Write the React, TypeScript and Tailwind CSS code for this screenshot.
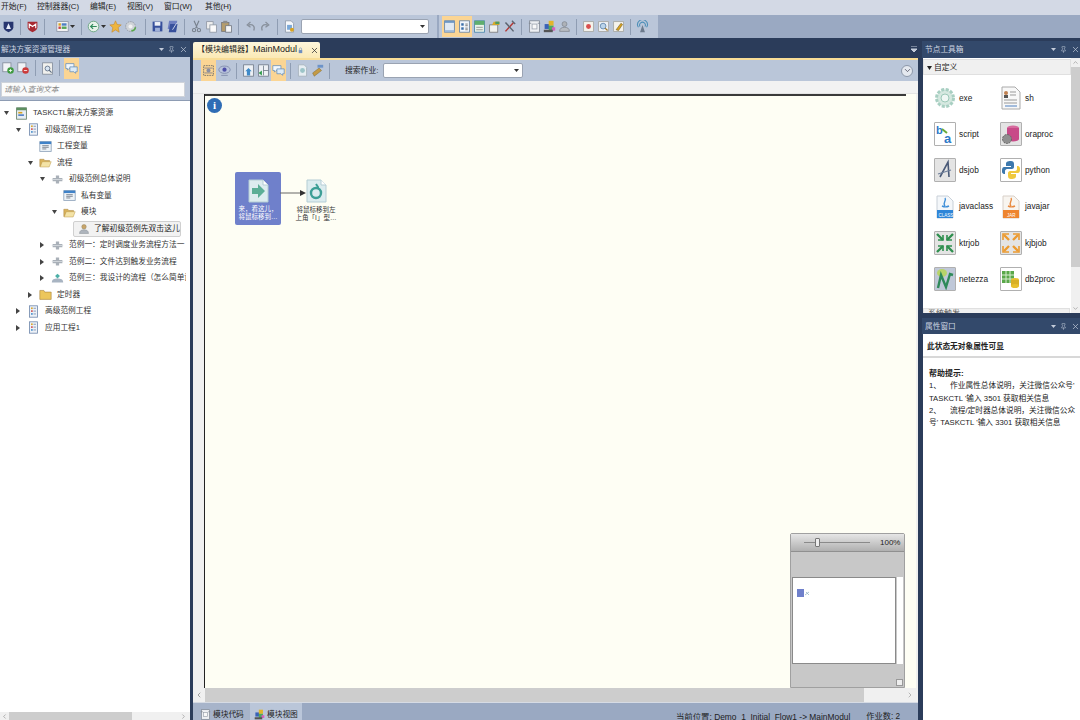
import React from 'react';
import { X, Pin, ChevronLeft, ChevronRight, ChevronUp, ChevronDown } from 'lucide-react';

const cjk = { fontFamily: '"Liberation Sans", "Noto Sans CJK SC", sans-serif' };

type IconProps = { name: string; size?: number };

// small toolbar and tree drawings
const Icon = ({ name, size = 14 }: IconProps) => {
  const body: Record<string, React.ReactNode> = {
    shieldBlue: <><path d="M2 2h12v7c0 3-3 5-6 6-3-1-6-3-6-6z" fill="#27356f" /><path d="M8 4l3 7H5z" fill="#e8ecf8" /></>,
    shieldRed: <><path d="M2 2h12v7c0 3-3 5-6 6-3-1-6-3-6-6z" fill="#a82a33" /><path d="M4 10V5l4 3 4-3v5" stroke="#fff" fill="none" strokeWidth="1.4" /></>,
    grid: <><rect x="1" y="2" width="14" height="12" fill="#f4f4f4" stroke="#8a93a5" /><rect x="3" y="4" width="3" height="3" fill="#d9a321" /><rect x="7" y="4" width="6" height="3" fill="#4f7fc4" /><rect x="3" y="8" width="3" height="3" fill="#c8474a" /><rect x="7" y="8" width="6" height="3" fill="#5aa55a" /></>,
    back: <><circle cx="8" cy="8" r="6.5" fill="#e8f3ea" stroke="#5f9f78" /><path d="M12 8H5M7.5 5L4.5 8l3 3" stroke="#2f8b5a" strokeWidth="1.5" fill="none" /></>,
    star: <><path d="M8 1l2 4.5 5 .5-3.7 3.3L12.5 15 8 12.3 3.5 15l1.2-5.7L1 6l5-.5z" fill="#eeb53f" stroke="#c4862a" strokeWidth=".7" /></>,
    gearGreen: <><circle cx="8" cy="8" r="6" fill="#cfd3d8" stroke="#8c939c" strokeDasharray="2 1" /><circle cx="8" cy="8" r="2.5" fill="#f2f2f2" /><path d="M9 13a4 4 0 0 0 5-4" stroke="#58a84a" strokeWidth="2" fill="none" /></>,
    save: <><rect x="2" y="2" width="12" height="12" fill="#37509c" /><rect x="4.5" y="2.5" width="7" height="4.5" fill="#eef1f8" /><rect x="5" y="9.5" width="6" height="4.5" fill="#9fb0d8" /></>,
    saveAll: <><rect x="4" y="1" width="10" height="10" fill="#6e7fc0" transform="skewX(-10)" /><rect x="3" y="5" width="9" height="10" fill="#37509c" transform="skewX(-10) translate(3 0)" /><path d="M8 12l5-8" stroke="#e8ecf8" /></>,
    cut: <><path d="M5 1l4 9M11 1L7 10" stroke="#77808c" strokeWidth="1.4" /><circle cx="5" cy="12.5" r="2" fill="none" stroke="#77808c" strokeWidth="1.3" /><circle cx="11" cy="12.5" r="2" fill="none" stroke="#77808c" strokeWidth="1.3" /></>,
    copy: <><rect x="2" y="2" width="8" height="9" fill="#eee" stroke="#8e96a2" /><rect x="6" y="6" width="8" height="9" fill="#fafafa" stroke="#8e96a2" /></>,
    paste: <><rect x="2" y="3" width="9" height="11" fill="#b59c6b" stroke="#777" /><rect x="4" y="1" width="5" height="3" fill="#8d8d8d" /><rect x="7" y="7" width="7" height="8" fill="#f6f6f6" stroke="#6f7680" /></>,
    undo: <path d="M12 13c2-5-1-8-6-7M8 2.5L4 6l4 3" stroke="#88909c" strokeWidth="1.6" fill="none" />,
    redo: <path d="M4 13C2 8 5 5 10 6M8 2.5L12 6 8 9" stroke="#88909c" strokeWidth="1.6" fill="none" />,
    doc: <><path d="M3 1h7l3 3v11H3z" fill="#f6f8fb" stroke="#8b97a8" /><rect x="5" y="6" width="6" height="6" fill="#7aa8d8" /><circle cx="11" cy="12" r="2.5" fill="#d9a321" /></>,
    paneA: <><rect x="2" y="1" width="12" height="14" fill="#dfe8f3" stroke="#5f7fa5" /><rect x="2" y="1" width="12" height="2.5" fill="#6d96c4" /><rect x="2" y="12.5" width="12" height="2.5" fill="#9db8d6" /></>,
    paneB: <><rect x="2" y="1" width="12" height="14" fill="#f2f6fa" stroke="#5f7fa5" /><rect x="4" y="4" width="3" height="3" fill="#3b6ea8" /><rect x="4" y="9" width="3" height="3" fill="#3b6ea8" /><path d="M9 5h3M9 7h3M9 10h3M9 12h3" stroke="#666" /></>,
    paneC: <><rect x="2" y="1" width="12" height="14" fill="#eaf4ea" stroke="#3f7fa8" /><rect x="2" y="1" width="12" height="5" fill="#5fae6f" /><path d="M4 9h8M4 12h8" stroke="#888" /></>,
    box: <><rect x="2" y="6" width="10" height="9" fill="#f1f1ee" stroke="#777" /><path d="M5 6l2-4h7v4z" fill="#d7a928" /><rect x="9" y="2" width="5" height="3" fill="#4f9a5f" /></>,
    tools: <><path d="M3 14L13 3" stroke="#b43a36" strokeWidth="1.8" /><path d="M3 3l10 11" stroke="#5b6470" strokeWidth="1.8" /><path d="M11 1l4 4" stroke="#5b6470" strokeWidth="1.6" /></>,
    frame: <><rect x="2" y="1" width="12" height="14" fill="#eef0f3" stroke="#7d8590" /><rect x="5" y="5" width="6" height="6" fill="#f8f8f8" stroke="#9aa2ad" /><path d="M1 4h3M12 4h3" stroke="#7d8590" /></>,
    blocks: <><rect x="2" y="5" width="6" height="6" fill="#3a62b8" /><rect x="7" y="1" width="6" height="6" fill="#e2b52a" /><rect x="7" y="7" width="6" height="6" fill="#4ea860" /><rect x="11" y="9" width="4" height="4" fill="#d85fc0" /><rect x="1" y="12" width="11" height="3" fill="#555" /></>,
    person: <><circle cx="8" cy="5" r="3" fill="#aeb2b8" stroke="#848a92" /><path d="M2 14c0-4 3-5 6-5s6 1 6 5z" fill="#b8bcc2" stroke="#848a92" /></>,
    noteRed: <><rect x="2" y="2" width="12" height="12" fill="#f5f3ec" stroke="#a5a5a0" /><circle cx="8" cy="8" r="3" fill="#d9504f" /></>,
    noteSearch: <><rect x="2" y="2" width="12" height="12" fill="#eef1f5" stroke="#a5a5a0" /><circle cx="7.5" cy="7.5" r="3.5" fill="#bcd4ea" stroke="#5d83aa" /><path d="M10 10l3 3" stroke="#a57b2a" strokeWidth="1.6" /></>,
    notePen: <><rect x="2" y="2" width="12" height="12" fill="#f5f3ec" stroke="#a5a5a0" /><path d="M5 12l6-8 2 1.5-5 7.5z" fill="#d9a321" stroke="#5a4a20" strokeWidth=".6" /></>,
    antenna: <><path d="M3 9a6 6 0 1 1 10 0M5 8a3.5 3.5 0 1 1 6 0" stroke="#4d8fb8" strokeWidth="1.3" fill="none" /><path d="M8 6l3 9H5z" fill="#6b7a8c" /></>,
    addGreen: <><rect x="1" y="1" width="10" height="11" fill="#f1f3f6" stroke="#808a98" /><circle cx="10.5" cy="10.5" r="4" fill="#3e9a3f" /><path d="M8.5 10.5h4M10.5 8.5v4" stroke="#fff" /></>,
    delRed: <><rect x="1" y="1" width="10" height="11" fill="#f1f3f6" stroke="#808a98" /><circle cx="10.5" cy="10.5" r="4" fill="#cc3b3b" /><path d="M8.5 10.5h4" stroke="#fff" /></>,
    find: <><rect x="2" y="1" width="12" height="14" fill="#f1f1ee" stroke="#808a98" /><circle cx="8" cy="8" r="3" fill="#d7e4f2" stroke="#5a6a80" /><path d="M10 10l3 3" stroke="#5a6a80" strokeWidth="1.4" /></>,
    chat: <><path d="M1 2h10v6H5l-2 2V8H1z" fill="#f2f7fc" stroke="#6d93bd" /><path d="M6 6h9v6h-2v2l-2-2H6z" fill="#dcebf8" stroke="#6d93bd" /></>,
    fit: <><rect x="2" y="2" width="12" height="12" fill="none" stroke="#666" strokeDasharray="2 1" /><path d="M3 5l10 0M3 11h10" stroke="#778" /><circle cx="8" cy="8" r="2.5" fill="#8b8fa0" /></>,
    eye: <><ellipse cx="8" cy="7" rx="7" ry="4.5" fill="#b9c4dc" stroke="#7a86a8" /><circle cx="8" cy="7" r="2.6" fill="#4d4fa8" /><path d="M4 14h8" stroke="#7a86a8" /></>,
    upTree: <><rect x="2" y="1" width="12" height="14" fill="#eef1f5" stroke="#6f7a88" /><path d="M8 5l4 4h-2v5H6V9H4z" fill="#3f8ac8" /></>,
    leftTree: <><rect x="2" y="1" width="12" height="14" fill="#eef1f5" stroke="#6f7a88" /><path d="M8 2v12M8 8h6" stroke="#6f7a88" /><path d="M2 11l4-3v6z" fill="#2f9a4a" /></>,
    runDoc: <><path d="M3 1h7l3 3v11H3z" fill="#e6edf2" stroke="#a4b0ba" /><circle cx="8" cy="8" r="3" fill="#9cc4c8" /></>,
    brush: <><path d="M4 15l-2-4 8-6 3 3z" fill="#c49a45" stroke="#806a30" strokeWidth=".6" /><rect x="8" y="1" width="7" height="3.5" fill="#6d93c8" /></>,
    root: <><rect x="2" y="1" width="12" height="14" fill="#e8eef4" stroke="#5d7a60" /><rect x="2" y="1" width="12" height="3" fill="#5d8f5f" /><rect x="4" y="6" width="5" height="2" fill="#d9a321" /><rect x="4" y="9" width="7" height="2" fill="#4f7fc4" /></>,
    project: <><rect x="3" y="1" width="10" height="14" fill="#eef2f8" stroke="#6f87ab" /><rect x="5" y="3" width="2" height="2" fill="#d9a321" /><rect x="5" y="6.5" width="2" height="2" fill="#cc4a4a" /><rect x="5" y="10" width="2" height="2" fill="#3f8ac8" /><path d="M8 4h3M8 7.5h3M8 11h3" stroke="#6f87ab" /></>,
    vars: <><rect x="1" y="2" width="14" height="12" fill="#eef3f8" stroke="#8aa0b8" /><rect x="1" y="2" width="14" height="3" fill="#3f82c8" /><path d="M4 7h8M4 9h8M4 11h5" stroke="#6a7480" /></>,
    folderOpen: <><path d="M1 4h5l1 1.5h6V8H4L2 13H1z" fill="#d9b25a" stroke="#a5803a" strokeWidth=".6" /><path d="M4 7h11l-2.5 6.5H1.5z" fill="#f4e3a6" stroke="#bd9a4c" strokeWidth=".6" /></>,
    folder: <><path d="M1 3h5l1 2h8v9H1z" fill="#ecc65c" stroke="#a5803a" strokeWidth=".7" /></>,
    flow: <><path d="M6 3h4v3h4v4h-4v3H6v-3H2V6h4z" fill="#a9b0b8" /><path d="M1 8h14" stroke="#d8dce0" /></>,
    flowTeal: <><path d="M1 13c0-4 3-5 7-5s7 1 7 5z" fill="#a8b4c2" /><path d="M8 2l3 3-3 3-3-3z" fill="#4db0a8" /></>,
    userJob: <><circle cx="8" cy="5" r="3" fill="#c9a66b" stroke="#8a7a55" strokeWidth=".6" /><path d="M2 14c0-4 3-5 6-5s6 1 6 5z" fill="#aeb4bc" stroke="#7f868e" strokeWidth=".6" /></>,
    lock: <><rect x="4" y="7" width="8" height="7" fill="#6f8fc0" /><path d="M5.5 7V4.5a2.5 2.5 0 0 1 5 0V7" stroke="#6f8fc0" strokeWidth="1.4" fill="none" /></>,
  };
  return (
    <svg width={size} height={size} viewBox="0 0 16 16" className="shrink-0">
      {body[name]}
    </svg>
  );
};

const Sep = () => <div className="w-px h-[16px] bg-[#8f9db3] mx-[4px] shrink-0" />;

const Tb = ({ name, on }: { name: string; on?: boolean }) => (
  <div className={`w-[15px] h-[21px] flex items-center justify-center shrink-0 ${on ? 'bg-[#fbd594]' : ''}`}>
    <Icon name={name} size={13} />
  </div>
);

const Caret = () => (
  <svg width="5" height="3" viewBox="0 0 5 3" className="shrink-0"><path d="M0 0h5L2.5 3z" fill="#333" /></svg>
);

const Combo = ({ w }: { w: string }) => (
  <div className={`${w} h-[15px] bg-white border border-[#9aa3b2] rounded-[2px] flex items-center justify-end pr-[3px] shrink-0`}>
    <Caret />
  </div>
);

const PaneTitle = ({ title, h = 'h-[16px]', inner = 'pl-[1px] pr-[2px]' }: { title: string; h?: string; inner?: string }) => (
  <div className={`${h} ${inner} flex items-center bg-[#33496b] text-[#cbd3e0] text-[7.7px] leading-none shrink-0`}>
    <span className="flex-1 whitespace-nowrap overflow-hidden pt-px">{title}</span>
    <svg width="5" height="3" viewBox="0 0 5 3" className="mr-[4px]"><path d="M0 0h5L2.5 3z" fill="#c4ccda" /></svg>
    <Pin size={7} className="text-[#b8c2d2] mr-[4px]" />
    <X size={9} className="text-[#b8c2d2]" />
  </div>
);

const menus = ['开始(F)', '控制器器(C)', '编辑(E)', '视图(V)', '窗口(W)', '其他(H)'];

type Row = { level: number; icon: string; label: string; arrow?: 'open' | 'closed'; selected?: boolean };

const rows: Row[] = [
  { level: 0, icon: 'root', label: 'TASKCTL解决方案资源', arrow: 'open' },
  { level: 1, icon: 'project', label: '初级范例工程', arrow: 'open' },
  { level: 2, icon: 'vars', label: '工程变量' },
  { level: 2, icon: 'folderOpen', label: '流程', arrow: 'open' },
  { level: 3, icon: 'flow', label: '初级范例总体说明', arrow: 'open' },
  { level: 4, icon: 'vars', label: '私有变量' },
  { level: 4, icon: 'folderOpen', label: '模块', arrow: 'open' },
  { level: 5, icon: 'userJob', label: '了解初级范例先双击这儿', selected: true },
  { level: 3, icon: 'flow', label: '范例一：定时调度业务流程方法一', arrow: 'closed' },
  { level: 3, icon: 'flow', label: '范例二：文件达到触发业务流程', arrow: 'closed' },
  { level: 3, icon: 'flowTeal', label: '范例三：我设计的流程（怎么简单设计', arrow: 'closed' },
  { level: 2, icon: 'folder', label: '定时器', arrow: 'closed' },
  { level: 1, icon: 'project', label: '高级范例工程', arrow: 'closed' },
  { level: 1, icon: 'project', label: '应用工程1', arrow: 'closed' },
];

const TreeRow = ({ row }: { row: Row }) => {
  const indent = [3, 15, 27, 39, 51, 73][row.level];
  return (
    <div className="h-[16.5px] flex items-center whitespace-nowrap text-[7.7px] text-[#333] relative" style={{ paddingLeft: indent }}>
      {row.selected ? (
        <div className="h-[16px] w-[108px] flex items-center bg-[#f2f2f2] border border-[#d0d0d0] rounded-[2px] pl-[4px] gap-[4px] text-[7.8px] text-[#222]">
          <Icon name={row.icon} size={12} />
          <span>{row.label}</span>
        </div>
      ) : (
        <>
          <div className="w-[6px] flex justify-center shrink-0">
            {row.arrow === 'open' && <svg width="5" height="4" viewBox="0 0 5 4"><path d="M0 0h5L2.5 4z" fill="#444" /></svg>}
            {row.arrow === 'closed' && <svg width="4" height="6" viewBox="0 0 4 6"><path d="M0 0l4 3-4 3z" fill="#444" /></svg>}
          </div>
          <div className="ml-[6px] mr-[5px] shrink-0"><Icon name={row.icon} size={13} /></div>
          <span>{row.label}</span>
        </>
      )}
    </div>
  );
};

const LeftPanel = () => (
  <div className="w-[190px] flex flex-col shrink-0 overflow-hidden">
    <PaneTitle title="解决方案资源管理器" />
    <div className="h-[22px] bg-[#bac6d9] flex items-center pl-[1px] shrink-0">
      <Tb name="addGreen" />
      <Tb name="delRed" />
      <Sep />
      <Tb name="find" />
      <Sep />
      <Tb name="chat" on />
    </div>
    <div className="h-[21px] bg-[#bac6d9] px-[1px] pb-[2px] pt-[3px] shrink-0">
      <div className="h-[15px] w-[184px] bg-[#fbfbfb] border border-[#cfd3da] flex items-center pl-[2px] text-[7.8px] italic text-[#888]">请输入查询文本</div>
    </div>
    <div className="flex-1 bg-white pt-[4px] overflow-hidden pr-[3px] border-t border-[#8e9cb3]">
      <div className="w-[186px] overflow-hidden">
        {rows.map((row) => <TreeRow key={row.label} row={row} />)}
      </div>
    </div>
    <div className="h-[8px] bg-[#f0f0f0] flex items-center shrink-0 overflow-hidden">
      <ChevronLeft size={7} className="text-[#888] mx-[1px]" />
      <div className="w-[123px] h-full bg-[#cdcdcd]" />
      <div className="flex-1" />
      <ChevronRight size={7} className="text-[#888] mr-[3px]" />
    </div>
  </div>
);

const DocIcon = ({ glyph }: { glyph: 'arrow' | 'drop' }) => (
  <svg width="21" height="24" viewBox="0 0 21 24" className="block">
    <path d="M1 1h14l5 5v17H1z" fill="#dcecef" stroke="#b4cdd4" />
    <path d="M15 1v5h5" fill="#fff" stroke="#b4cdd4" />
    {glyph === 'arrow' && <path d="M4 9h6V5l7 7-7 7v-4H4z" fill="#5bae96" />}
    {glyph === 'drop' && (
      <>
        <path d="M10 5l2 3v2" stroke="#3d9f96" strokeWidth="2" fill="none" />
        <circle cx="10" cy="14" r="5" fill="none" stroke="#3d9f96" strokeWidth="2.4" />
      </>
    )}
  </svg>
);

const Canvas = () => (
  <div className="flex-1 relative bg-[#fefef4] border-l border-[#222] overflow-hidden">
    <div className="h-[2px] w-[701px] bg-[#3a3a3a]" />
    <div className="absolute left-[2px] top-[4px] w-[15px] h-[15px] rounded-full bg-[#2f6db5] flex items-center justify-center text-white text-[11px] font-bold leading-none" style={{ fontFamily: '"Liberation Serif", serif' }}>i</div>

    <div className="absolute left-[30px] top-[78px] w-[46px] h-[53px] bg-[#6f80cb] rounded-[2px] flex flex-col items-center pt-[7px]">
      <DocIcon glyph="arrow" />
      <div className="text-[6.5px] leading-[8px] text-white text-center mt-[2px] whitespace-nowrap">
        来，看这儿，<br />将鼠标移到…
      </div>
    </div>

    <svg width="28" height="8" viewBox="0 0 28 8" className="absolute left-[75px] top-[95px]">
      <path d="M0 4h22" stroke="#666" />
      <path d="M20 1l6 3-6 3z" fill="#333" />
    </svg>

    <div className="absolute left-[89px] top-[85px] w-[44px] flex flex-col items-center">
      <DocIcon glyph="drop" />
      <div className="text-[6.5px] leading-[8px] text-[#333] text-center mt-[3px] whitespace-nowrap">
        将鼠标移到左<br />上角「I」型…
      </div>
    </div>

    {/* minimap */}
    <div className="absolute left-[585px] top-[439px] w-[115px] h-[155px] bg-[#c8c8c8] border border-[#a0a0a0] rounded-t-[2px] flex flex-col">
      <div className="h-[18px] bg-gradient-to-b from-[#e6e6e6] to-[#b0b0b0] border-b border-[#909090] flex items-center pl-[13px] shrink-0">
        <div className="w-[66px] h-px bg-[#8a8a8a] relative">
          <div className="absolute left-[11px] -top-[4px] w-[5px] h-[9px] bg-[#eee] border border-[#777] rounded-[1px]" />
        </div>
        <span className="ml-[10px] text-[8px] text-[#222]">100%</span>
      </div>
      <div className="h-[25px] shrink-0" />
      <div className="flex h-[87px] shrink-0 pl-[1px]">
        <div className="w-[104px] bg-white border border-[#8a8a8a] relative">
          <div className="absolute left-[4px] top-[11px] w-[7px] h-[8px] bg-[#6f80cb]" />
          <svg width="5" height="5" viewBox="0 0 5 5" className="absolute left-[12px] top-[13px]"><path d="M0 4l4-3M1 1l3 3" stroke="#8ab" strokeWidth=".7" /></svg>
        </div>
        <div className="w-[6px] bg-white ml-px" />
      </div>
      <div className="flex-1 flex items-end justify-end pr-[1px] pb-[1px]">
        <div className="w-[7px] h-[7px] bg-[#eee] border border-[#999]" />
      </div>
    </div>
  </div>
);

const CenterPanel = () => (
  <div className="flex-1 flex flex-col ml-[3px] mr-[4px] min-w-0">
    <div className="h-[17px] flex items-end shrink-0 pt-[3px]">
      <div className="w-[127px] h-[16px] bg-gradient-to-b from-[#fdf6dc] to-[#fbe9b5] rounded-t-[2px] flex items-center pl-[4px] text-[8px] text-[#222] whitespace-nowrap">
        <span>【模块编辑器】</span>
        <span className="text-[9px]">MainModul</span>
        <Icon name="lock" size={7} />
        <X size={9} className="ml-[6px] text-[#333]" />
      </div>
      <div className="flex-1" />
      <svg width="6" height="6" viewBox="0 0 6 6" className="mb-[6px] mr-[1px]"><path d="M0 0h6M0 3h6L3 6z" stroke="#c4ccda" fill="#c4ccda" /></svg>
    </div>
    <div className="h-[2px] bg-[#f8dd97] shrink-0" />
    <div className="h-[21px] bg-[#bac6d9] flex items-center pl-[8px] pr-[5px] shrink-0">
      <Tb name="fit" on />
      <div className="w-[1px]" />
      <Tb name="eye" />
      <Sep />
      <Tb name="upTree" />
      <Tb name="leftTree" />
      <Tb name="chat" on />
      <Sep />
      <Tb name="runDoc" />
      <Tb name="brush" />
      <Sep />
      <span className="ml-[11px] mr-[5px] text-[7.8px] text-[#222] whitespace-nowrap">搜索作业:</span>
      <Combo w="w-[140px]" />
      <div className="flex-1" />
      <div className="w-[12px] h-[12px] rounded-full bg-[#e4e8ef] border border-[#8d98aa] flex items-center justify-center">
        <ChevronDown size={9} className="text-[#445]" />
      </div>
    </div>
    <div className="flex-1 bg-[#f0f0f0] flex flex-col min-h-0">
      <div className="h-[13px] shrink-0 bg-[#f2f2f2] border-b border-[#e4e4e4]" />
      <div className="flex-1 flex min-h-0 pr-[2px]">
        <div className="w-[11px] shrink-0" />
        <Canvas />
      </div>
      <div className="h-[14px] flex items-center shrink-0">
        <div className="w-[12px] flex justify-center"><ChevronLeft size={8} className="text-[#777]" /></div>
        <div className="w-[659px] h-full bg-[#cdcdcd]" />
        <div className="flex-1" />
        <ChevronRight size={8} className="text-[#999] mr-[4px]" />
      </div>
    </div>
    <div className="h-[18px] bg-[#9aa9c2] flex items-start shrink-0 text-[7.7px] text-[#222] whitespace-nowrap overflow-hidden border-t border-[#d6dbe4]">
      <div className="h-[18px] w-[57px] flex items-center bg-[#a7b4ca] pl-[7px] gap-[2px] pt-[5px] shrink-0">
        <Icon name="frame" size={11} />
        <span>模块代码</span>
      </div>
      <div className="h-[18px] w-[52px] flex items-center pl-[4px] gap-[2px] bg-[#bac6d9] pt-[5px] shrink-0">
        <Icon name="blocks" size={11} />
        <span>模块视图</span>
      </div>
      <div className="flex-1" />
      <span className="mt-[8px] text-[8.4px]">当前位置: Demo_1_Initial_Flow1 -&gt; MainModul</span>
      <span className="mt-[8px] ml-[16px] mr-[18px] text-[8.2px]">作业数: 2</span>
    </div>
  </div>
);

type NodeItem = { label: string; icon: React.ReactNode };

const frameCls = 'w-[22px] h-[24px] flex items-center justify-center bg-[#e4e4e4] border border-[#b0b0b0] rounded-[1px] overflow-hidden';

const Framed = ({ children }: { children: React.ReactNode }) => (
  <div className={frameCls}>
    <svg width="20" height="22" viewBox="0 0 20 22">{children}</svg>
  </div>
);

const nodes: NodeItem[] = [
  { label: 'exe', icon: <svg width="22" height="24" viewBox="0 0 22 22"><circle cx="11" cy="11" r="8.5" fill="#d5e8e0" stroke="#a8cfc2" strokeWidth="3" strokeDasharray="3 1.5" /><circle cx="11" cy="11" r="4" fill="#eff7f4" stroke="#9cc8b8" /></svg> },
  { label: 'sh', icon: <svg width="20" height="24" viewBox="0 0 20 24"><path d="M1 1h13l5 5v17H1z" fill="#f8f8f8" stroke="#aaa" /><circle cx="5" cy="7" r="2" fill="#c08050" /><rect x="3" y="9" width="4" height="3" fill="#555" /><path d="M9 6h6M9 9h6M3 14h13M3 17h13" stroke="#999" /><path d="M4 20h12" stroke="#4d7fc0" /></svg> },
  { label: 'script', icon: <Framed><rect width="20" height="22" fill="#fff" /><text x="1" y="11" fontSize="11" fontWeight="bold" fill="#2d78c8" fontFamily="Liberation Sans">b</text><text x="9" y="20" fontSize="13" fontWeight="bold" fill="#2d78c8" fontFamily="Liberation Sans">a</text><path d="M7 6l5 4" stroke="#6aaa3a" strokeWidth="2" /></Framed> },
  { label: 'oraproc', icon: <Framed><ellipse cx="12" cy="5" rx="6" ry="2.5" fill="#d76a9e" /><rect x="6" y="5" width="12" height="11" fill="#c84a88" /><ellipse cx="12" cy="16" rx="6" ry="2.5" fill="#c84a88" /><circle cx="6" cy="16" r="4.5" fill="#8f8f8f" stroke="#666" strokeDasharray="2 1" /></Framed> },
  { label: 'dsjob', icon: <Framed><path d="M5 18L13 3l1 15" fill="none" stroke="#4a5a78" strokeWidth="1.6" /><path d="M3 15l13-4" stroke="#6f7f9a" strokeWidth="1.2" /></Framed> },
  { label: 'python', icon: <Framed><rect width="20" height="22" fill="#fff" /><path d="M10 2c-4 0-5 1-5 3v2h5v1H3c-2 0-2 3-2 4s0 3 3 3v-3c0-1 1-2 2-2h5c1 0 2-1 2-2V5c0-2-1-3-3-3z" fill="#3d78ad" /><path d="M10 20c4 0 5-1 5-3v-2h-5v-1h7c2 0 2-3 2-4s0-3-3-3v3c0 1-1 2-2 2H9c-1 0-2 1-2 2v3c0 2 1 3 3 3z" fill="#f0c93e" /></Framed> },
  { label: 'javaclass', icon: <svg width="18" height="24" viewBox="0 0 18 24"><path d="M1 1h11l5 5v17H1z" fill="#f4f7fa" stroke="#c8d0d8" /><path d="M9 3c2 3-3 4 0 8M6 11c2 1 5 1 7 0" stroke="#3f8fd8" strokeWidth="1.4" fill="none" /><rect x="1" y="15" width="16" height="8" fill="#2f86d8" /><text x="2.5" y="21.5" fontSize="4.5" fill="#fff" fontFamily="Liberation Sans">CLASS</text></svg> },
  { label: 'javajar', icon: <svg width="18" height="24" viewBox="0 0 18 24"><path d="M1 1h11l5 5v17H1z" fill="#f8f5f0" stroke="#d8d0c8" /><path d="M9 3c2 3-3 4 0 8M6 11c2 1 5 1 7 0" stroke="#e88a40" strokeWidth="1.4" fill="none" /><rect x="1" y="15" width="16" height="8" fill="#ee8530" /><text x="5" y="21.5" fontSize="4.5" fill="#fff" fontFamily="Liberation Sans">JAR</text></svg> },
  { label: 'ktrjob', icon: <Framed><path d="M2 2l6 6M18 2l-6 6M2 20l6-6M18 20l-6-6" stroke="#2f8f4f" strokeWidth="2.4" /><path d="M8 3v5H3M12 3v5h5M8 19v-5H3M12 19v-5h5" stroke="#2f8f4f" strokeWidth="1.6" fill="none" /></Framed> },
  { label: 'kjbjob', icon: <Framed><path d="M8 8L3 3M12 8l5-5M8 14l-5 5M12 14l5 5" stroke="#eb9a30" strokeWidth="2.4" /><path d="M2 8V2h6M18 8V2h-6M2 14v6h6M18 14v6h-6" stroke="#eb9a30" strokeWidth="1.6" fill="none" /></Framed> },
  { label: 'netezza', icon: <Framed><rect width="20" height="22" fill="#c0c8d8" /><ellipse cx="7" cy="5" rx="5" ry="4" fill="#b8d46a" /><path d="M3 20l3-13 5 12 4-13 3 1" stroke="#2f8a5a" strokeWidth="2.4" fill="none" /></Framed> },
  { label: 'db2proc', icon: <Framed><rect width="20" height="22" fill="#fff" /><rect x="1" y="3" width="12" height="12" fill="#5aa84a" /><path d="M1 7h12M1 11h12M5 3v12M9 3v12" stroke="#d8ecd0" /><ellipse cx="14" cy="12" rx="4" ry="2" fill="#e8c030" /><rect x="10" y="12" width="8" height="6" fill="#d8b028" /><ellipse cx="14" cy="18" rx="4" ry="2" fill="#e8c030" /></Framed> },
];

const RightPanel = () => (
  <div className="w-[158px] flex flex-col shrink-0 overflow-hidden">
    <div className="h-[272px] flex flex-col shrink-0">
      <PaneTitle title="节点工具箱" h="h-[17px]" inner="pl-[3px] pr-0" />
      <div className="flex-1 bg-white flex min-h-0 ml-[1px]">
        <div className="flex-1 relative overflow-hidden">
          <div className="h-[16px] bg-[#f0f0f0] border border-[#e0e0e0] flex items-center pl-[3px] pt-px gap-[2px] text-[7.8px] text-[#222] mt-[1px]">
            <svg width="5" height="4" viewBox="0 0 5 4"><path d="M0 0h5L2.5 4z" fill="#222" /></svg>
            <span>自定义</span>
          </div>
          <div className="grid grid-cols-[66px_66px] auto-rows-[36.2px] pl-[10px] pt-[5px]">
            {nodes.map((n) => (
              <div key={n.label} className="flex items-center">
                <div className="w-[24px] flex justify-center shrink-0">{n.icon}</div>
                <span className="ml-[2px] text-[8.3px] text-[#222]">{n.label}</span>
              </div>
            ))}
          </div>
          <div className="absolute left-0 right-[1px] -bottom-[7px] h-[12px] bg-[#f0f0f0] border border-[#e0e0e0] text-[8px] text-[#555] pl-[4px] leading-[10px]">系统触发</div>
        </div>
        <div className="w-[9px] bg-[#f0f0f0] flex flex-col items-center shrink-0">
          <ChevronUp size={7} className="text-[#888] my-[1px]" />
          <div className="w-full h-[200px] bg-[#cdcdcd]" />
          <div className="flex-1" />
          <ChevronDown size={7} className="text-[#888] mb-[1px]" />
        </div>
      </div>
    </div>
    <div className="h-[5px] shrink-0" />
    <PaneTitle title="属性窗口" inner="pl-[3px] pr-0" />
    <div className="flex-1 bg-white ml-[1px] text-[#222] text-[7.7px] leading-[12.3px] whitespace-nowrap overflow-hidden">
      <div className="h-[24px] flex items-center pl-[4px] pt-[5px] font-bold border-b-2 border-[#d8d8d8]">此状态无对象属性可显</div>
      <div className="pl-[6px] pt-[9px] pr-[3px]">
        <div className="font-bold text-[8px] pt-px">帮助提示:</div>
        <p><span className="inline-block w-[21px]">1、</span>作业属性总体说明，关注微信公众号'</p>
        <p>TASKCTL '输入 3501 获取相关信息</p>
        <p><span className="inline-block w-[21px]">2、</span>流程/定时器总体说明，关注微信公众</p>
        <p>号' TASKCTL '输入 3301 获取相关信息</p>
      </div>
    </div>
  </div>
);

export default function App() {
  return (
    <div className="w-[1080px] h-[720px] overflow-hidden flex flex-col bg-[#2b3c5a]" style={cjk}>
      <div className="h-[15px] bg-[#d3d9e5] flex items-start shrink-0 text-[7.8px] text-[#222] leading-[13px] whitespace-nowrap">
        <span className="w-[37px] pl-px">{menus[0]}</span>
        <span className="w-[53px]">{menus[1]}</span>
        <span className="w-[37px]">{menus[2]}</span>
        <span className="w-[37px]">{menus[3]}</span>
        <span className="w-[41px]">{menus[4]}</span>
        <span>{menus[5]}</span>
      </div>
      <div className="h-[23px] bg-[#9aa9c2] flex items-center shrink-0">
        <div className="h-full w-[437px] bg-[#bac6d9] flex items-center pl-[1px] shrink-0">
          <Tb name="shieldBlue" />
          <Sep />
          <Tb name="shieldRed" />
          <Sep />
          <div className="w-[6px] shrink-0" />
          <Tb name="grid" />
          <div className="w-[5px] mr-[2px] flex justify-center shrink-0"><Caret /></div>
          <Sep />
          <Tb name="back" />
          <div className="w-[5px] mr-[2px] flex justify-center shrink-0"><Caret /></div>
          <Tb name="star" />
          <Tb name="gearGreen" />
          <div className="w-[3px] shrink-0" />
          <Sep />
          <Tb name="save" />
          <Tb name="saveAll" />
          <Sep />
          <Tb name="cut" />
          <Tb name="copy" />
          <Tb name="paste" />
          <Sep />
          <Tb name="undo" />
          <Tb name="redo" />
          <Sep />
          <Tb name="doc" />
          <div className="w-[4px] shrink-0" />
          <Combo w="w-[128px]" />
        </div>
        <div className="h-full ml-[2px] w-[219px] bg-[#bac6d9] flex items-center pl-[3px] shrink-0">
          <Tb name="paneA" on />
          <Tb name="paneB" on />
          <Tb name="paneC" />
          <Tb name="box" />
          <Tb name="tools" />
          <Sep />
          <div className="w-[1px] shrink-0" />
          <Tb name="frame" />
          <Tb name="blocks" />
          <Tb name="person" />
          <Sep />
          <Tb name="noteRed" />
          <Tb name="noteSearch" />
          <Tb name="notePen" />
          <Sep />
          <Tb name="antenna" />
        </div>
      </div>
      <div className="flex-1 flex min-h-0 pt-[3px]">
        <LeftPanel />
        <CenterPanel />
        <RightPanel />
      </div>
    </div>
  );
}
